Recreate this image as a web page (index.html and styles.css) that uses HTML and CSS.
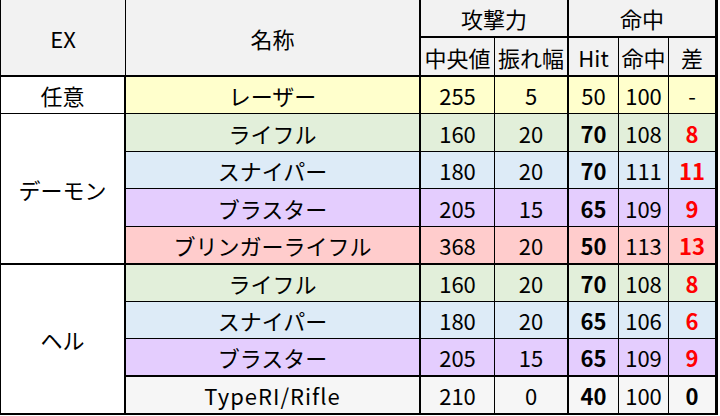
FILE: index.html
```html
<!DOCTYPE html>
<html lang="ja">
<head>
<meta charset="utf-8">
<link rel="stylesheet" href="styles.css">
</head>
<body>
<div class="sheet">
  <div class="c hd rs2 bb2">EX</div>
  <div class="c hd rs2 br2 bb2">名称</div>
  <div class="c hd cs2 br2 bb2">攻撃力</div>
  <div class="c hd cs3 br3 bb2">命中</div>
  <div class="c hd bb2">中央値</div>
  <div class="c hd br2 bb2">振れ幅</div>
  <div class="c hd bb2">Hit</div>
  <div class="c hd bb2">命中</div>
  <div class="c hd br3 bb2">差</div>

  <div class="c wt br2">任意</div>
  <div class="c yl br2">レーザー</div>
  <div class="c yl">255</div>
  <div class="c yl br2">5</div>
  <div class="c yl">50</div>
  <div class="c yl">100</div>
  <div class="c yl br3">-</div>

  <div class="c wt rs4 br2 bb2">デーモン</div>
  <div class="c gr br2">ライフル</div>
  <div class="c gr">160</div>
  <div class="c gr br2">20</div>
  <div class="c gr b">70</div>
  <div class="c gr">108</div>
  <div class="c gr br3 b red">8</div>

  <div class="c bl br2">スナイパー</div>
  <div class="c bl">180</div>
  <div class="c bl br2">20</div>
  <div class="c bl b">70</div>
  <div class="c bl">111</div>
  <div class="c bl br3 b red">11</div>

  <div class="c pu br2">ブラスター</div>
  <div class="c pu">205</div>
  <div class="c pu br2">15</div>
  <div class="c pu b">65</div>
  <div class="c pu">109</div>
  <div class="c pu br3 b red">9</div>

  <div class="c pk br2 bb2">ブリンガーライフル</div>
  <div class="c pk bb2">368</div>
  <div class="c pk br2 bb2">20</div>
  <div class="c pk b bb2">50</div>
  <div class="c pk bb2">113</div>
  <div class="c pk br3 b red bb2">13</div>

  <div class="c wt rs4 br2 bb2">ヘル</div>
  <div class="c gr br2">ライフル</div>
  <div class="c gr">160</div>
  <div class="c gr br2">20</div>
  <div class="c gr b">70</div>
  <div class="c gr">108</div>
  <div class="c gr br3 b red">8</div>

  <div class="c bl br2">スナイパー</div>
  <div class="c bl">180</div>
  <div class="c bl br2">20</div>
  <div class="c bl b">65</div>
  <div class="c bl">106</div>
  <div class="c bl br3 b red">6</div>

  <div class="c pu br2 bb2">ブラスター</div>
  <div class="c pu bb2">205</div>
  <div class="c pu br2 bb2">15</div>
  <div class="c pu b bb2">65</div>
  <div class="c pu bb2">109</div>
  <div class="c pu br3 b red bb2">9</div>

  <div class="c lg br2 bb2 latin">TypeRI/Rifle</div>
  <div class="c lg bb2">210</div>
  <div class="c lg br2 bb2">0</div>
  <div class="c lg b bb2">40</div>
  <div class="c lg bb2">100</div>
  <div class="c lg br3 b bb2">0</div>
</div>
</body>
</html>
```

FILE: styles.css
```css
html, body {
  margin: 0;
  padding: 0;
  background: #ffffff;
}

.sheet {
  display: grid;
  grid-template-columns: 125px 295px 74px 74px 50px 50px 49px;
  grid-template-rows: 38px 39px 37px 38px 37px 38px 38px 37px 37px 38px 38px;
  width: 718px;
  box-sizing: border-box;
  border-left: 1px solid #000;
  font-family: "Noto Sans CJK JP", "Noto Sans", sans-serif;
  font-size: 22px;
  color: #000;
}

.c {
  box-sizing: border-box;
  display: flex;
  align-items: center;
  justify-content: center;
  border-right: 1px solid #000;
  border-bottom: 1px solid #000;
  white-space: nowrap;
  line-height: 1;
}

.rs2 { grid-row: span 2; }
.rs4 { grid-row: span 4; }
.cs2 { grid-column: span 2; }
.cs3 { grid-column: span 3; }

.br2 { border-right-width: 2px; }
.br3 { border-right-width: 3px; }
.bb2 { border-bottom-width: 2px; }

.hd { background: #f2f2f2; }
.wt { background: #ffffff; }
.yl { background: #ffffcc; }
.gr { background: #e2efda; }
.bl { background: #ddebf7; }
.pu { background: #e4cdfe; }
.pk { background: #ffcccc; }
.lg { background: #f6f6f6; }

.b { font-weight: 700; }
.red { color: #ff0000; }
.latin { letter-spacing: 1px; }
```
